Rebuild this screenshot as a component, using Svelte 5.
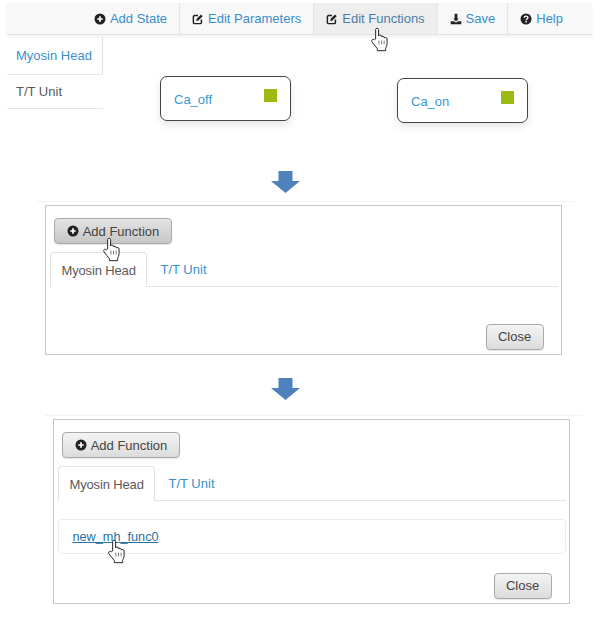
<script>
	const navItems = [
		{ label: 'Add State', icon: 'plus' },
		{ label: 'Edit Parameters', icon: 'edit' },
		{ label: 'Edit Functions', icon: 'edit', active: true },
		{ label: 'Save', icon: 'save' },
		{ label: 'Help', icon: 'help' }
	];
	const nodes = [
		{ name: 'Ca_off', cls: 'off' },
		{ name: 'Ca_on', cls: 'on' }
	];
</script>

{#snippet icon(name)}
	<svg class="icon" viewBox="0 0 14 14" aria-hidden="true">
		{#if name === 'plus'}
			<circle cx="7" cy="7" r="6.4" fill="#222" />
			<path d="M7 3.8v6.4M3.8 7h6.4" stroke="#fff" stroke-width="2" />
		{:else if name === 'edit'}
			<path d="M11 7.5V11a1.4 1.4 0 0 1-1.4 1.4H3A1.4 1.4 0 0 1 1.6 11V4.4A1.4 1.4 0 0 1 3 3h4" fill="none" stroke="#222" stroke-width="1.7" />
			<path d="M5 9.2l.5-2.4 5-5 2 2-5 5z" fill="#222" />
		{:else if name === 'save'}
			<path d="M5.4 1h3.2v5.4h1.6L7 10 3.8 6.4h1.6z" fill="#222" />
			<path d="M.8 9.6h4L7 11.4l2.2-1.8h4V13H.8z" fill="#222" />
		{:else}
			<circle cx="7" cy="7" r="6.4" fill="#222" />
			<path d="M4.9 5.6C4.9 3 9.2 3 9.2 5.5c0 1.6-2.1 1.5-2.1 3" fill="none" stroke="#fff" stroke-width="1.6" />
			<rect x="6.2" y="9.4" width="1.8" height="1.7" fill="#fff" />
		{/if}
	</svg>
{/snippet}

{#snippet hand(cls)}
	<svg class="hand {cls}" viewBox="0 0 18 23" aria-hidden="true">
		<path d="M5 11V2.4C5 .7 7.7 .7 7.7 2.4V8.2C8.1 7 10.1 7 10.3 8.4V9.2C10.8 8.1 12.6 8.2 12.8 9.6V10.2C13.3 9.2 15.4 9.4 15.5 11V15.2C15.5 17.2 14.6 18.2 14.2 19.7V21.8H6.6V20C5 18.2 3.6 16.2 1.7 13.7C.5 12 2.4 10.5 3.8 11.7Z" fill="#fff" stroke="#222" stroke-width=".9" stroke-linejoin="round" />
		<path d="M8 12.5v3.5M10.4 12.5v3.5M12.8 12.5v3.5" stroke="#666" stroke-width=".8" />
	</svg>
{/snippet}

{#snippet arrow()}
	<svg class="arrow" viewBox="0 0 29 22" aria-hidden="true">
		<path d="M7.5 0h14v10H29L14.5 22 0 10h7.5z" fill="#4f81bd" />
	</svg>
{/snippet}

{#snippet addButton()}
	<button class="btn add">{@render icon('plus')}Add Function</button>
{/snippet}

{#snippet tabs()}
	<div class="tabs">
		<span class="tab current">Myosin Head</span>
		<span class="tab">T/T Unit</span>
	</div>
{/snippet}

<main class="page">
	<nav class="navbar">
		{#each navItems as item}
			<a class="nav-item" class:active={item.active} href="#top">
				{@render icon(item.icon)}<span>{item.label}</span>
			</a>
		{/each}
		{@render hand('hand-nav')}
	</nav>

	<section class="editor">
		<div class="side-tabs">
			<a class="side current" href="#top">Myosin Head</a>
			<span class="side">T/T Unit</span>
		</div>
		<div class="canvas">
			{#each nodes as node}
				<div class="node {node.cls}">
					<span>{node.name}</span>
					<i class="swatch"></i>
				</div>
			{/each}
		</div>
	</section>

	<div class="arrow-row first">{@render arrow()}</div>

	<section class="dialog first-dialog">
		<div class="dialog-box">
			{@render addButton()}
			{@render hand('hand-add')}
			{@render tabs()}
			<div class="footer"><button class="btn close">Close</button></div>
		</div>
	</section>

	<div class="arrow-row second">{@render arrow()}</div>

	<section class="dialog second-dialog">
		<div class="dialog-box">
			{@render addButton()}
			{@render tabs()}
			<div class="list-item">
				<a href="#top">new_mh_func0</a>
				{@render hand('hand-link')}
			</div>
			<div class="footer"><button class="btn close">Close</button></div>
		</div>
	</section>
</main>

<style>
	:global(body) {
		margin: 0;
		background: #fff;
	}
	.page {
		width: 611px;
		height: 625px;
		overflow: hidden;
		font-family: "Liberation Sans", Arial, sans-serif;
		font-size: 13px;
		color: #5a5a5a;
		padding-top: 3px;
		box-sizing: border-box;
	}
	a {
		color: #3a8fcb;
		text-decoration: none;
	}
	.icon {
		width: 12px;
		height: 12px;
		flex: none;
	}

	/* top bar */
	.navbar {
		position: relative;
		display: flex;
		justify-content: flex-end;
		width: 585px;
		height: 32px;
		margin-left: 7px;
		padding-right: 17px;
		box-sizing: border-box;
		background: #f8f8f8;
		border-bottom: 1px solid #e4e4e4;
		box-shadow: 0 2px 3px rgba(0, 0, 0, 0.06);
	}
	.nav-item {
		display: flex;
		align-items: center;
		gap: 4px;
		padding: 0 12px;
		border-left: 1px solid #e6e6e6;
		white-space: nowrap;
	}
	.nav-item:first-of-type {
		border-left: 0;
	}
	.nav-item.active {
		background: #eee;
		color: #4a7ea8;
	}
	.hand {
		position: absolute;
		width: 20px;
		height: 25px;
	}
	.hand-nav {
		left: 363px;
		top: 24px;
	}

	/* state editor */
	.editor {
		display: flex;
		height: 136px;
		margin-left: 7px;
	}
	.side-tabs {
		width: 96px;
		margin-top: 2px;
	}
	.side {
		display: flex;
		align-items: center;
		box-sizing: border-box;
		height: 34px;
		padding-left: 9px;
		border-bottom: 1px solid #e6e6e6;
	}
	.side.current {
		height: 38px;
		border-right: 1px solid #e0e0e0;
		color: #3a8fcb;
	}
	.canvas {
		position: relative;
		flex: 1;
	}
	.node {
		position: absolute;
		display: flex;
		box-sizing: border-box;
		width: 131px;
		height: 45px;
		border: 1.5px solid #444;
		border-radius: 7px;
		background: #fff;
		box-shadow: 0 4px 9px rgba(0, 0, 0, 0.1);
		color: #3a97d0;
		padding: 15px 0 0 13px;
	}
	.node.off {
		left: 57px;
		top: 41px;
	}
	.node.on {
		left: 294px;
		top: 43px;
	}
	.swatch {
		position: absolute;
		top: 12px;
		right: 13px;
		width: 13px;
		height: 13px;
		background: #9cbb12;
	}

	.arrow-row {
		display: flex;
		padding-left: 271px;
	}
	.arrow {
		display: block;
		width: 29px;
		height: 22px;
	}
	.arrow-row.second {
		margin-top: 23px;
	}

	/* dialogs */
	.dialog {
		box-sizing: border-box;
		width: 538px;
		margin-top: 8px;
		padding-top: 3px;
		border-top: 1px solid #f3f3f3;
	}
	.first-dialog {
		margin-left: 37px;
		padding-left: 8px;
	}
	.second-dialog {
		margin-top: 15px;
		margin-left: 45px;
		padding-left: 8px;
	}
	.dialog-box {
		position: relative;
		display: flex;
		flex-direction: column;
		box-sizing: border-box;
		width: 517px;
		padding: 12px 3.5px 4.5px;
		border: 1.5px solid #c8c8c8;
	}
	.first-dialog .dialog-box {
		height: 150px;
	}
	.second-dialog .dialog-box {
		height: 185px;
	}
	.btn {
		box-sizing: border-box;
		display: flex;
		align-items: center;
		justify-content: center;
		height: 26px;
		padding: 0;
		font: inherit;
		color: #444;
		border: 1px solid #aaa;
		border-radius: 4px;
		background: linear-gradient(#f4f4f4, #dcdcdc);
		box-shadow: 0 1px 1px rgba(0, 0, 0, 0.1);
	}
	.add {
		gap: 4px;
		width: 118px;
		margin-left: 4.5px;
	}
	.first-dialog .add {
		background: linear-gradient(#e4e4e4, #c6c6c6);
	}
	.tabs {
		display: flex;
		align-items: flex-end;
		height: 34px;
		margin-top: 8px;
		border-bottom: 1px solid #e4e4e4;
	}
	.tab {
		display: flex;
		align-items: center;
		box-sizing: border-box;
		height: 34px;
		padding: 0 14px;
		white-space: nowrap;
		color: #3a8fcb;
	}
	.tab.current {
		width: 97px;
		padding: 0 11px;
		margin-bottom: -1px;
		height: 35px;
		background: #fff;
		color: #5a5a5a;
		border: 1px solid #e4e4e4;
		border-bottom: 0;
		border-radius: 4px 4px 0 0;
		letter-spacing: -0.15px;
	}
	.list-item {
		position: relative;
		display: flex;
		align-items: center;
		box-sizing: border-box;
		height: 35px;
		margin-top: 18px;
		padding-left: 14px;
		border: 1px solid #ececec;
		border-radius: 4px;
	}
	.list-item a {
		color: #27709f;
		text-decoration: underline;
		font-size: 12.7px;
	}
	.hand-add {
		left: 56px;
		top: 31px;
	}
	.hand-link {
		left: 48px;
		top: 19px;
	}
	.footer {
		display: flex;
		justify-content: flex-end;
		margin-top: auto;
		padding: 0 14px 0 0;
	}
	.close {
		width: 58px;
		height: 25.5px;
	}
</style>
